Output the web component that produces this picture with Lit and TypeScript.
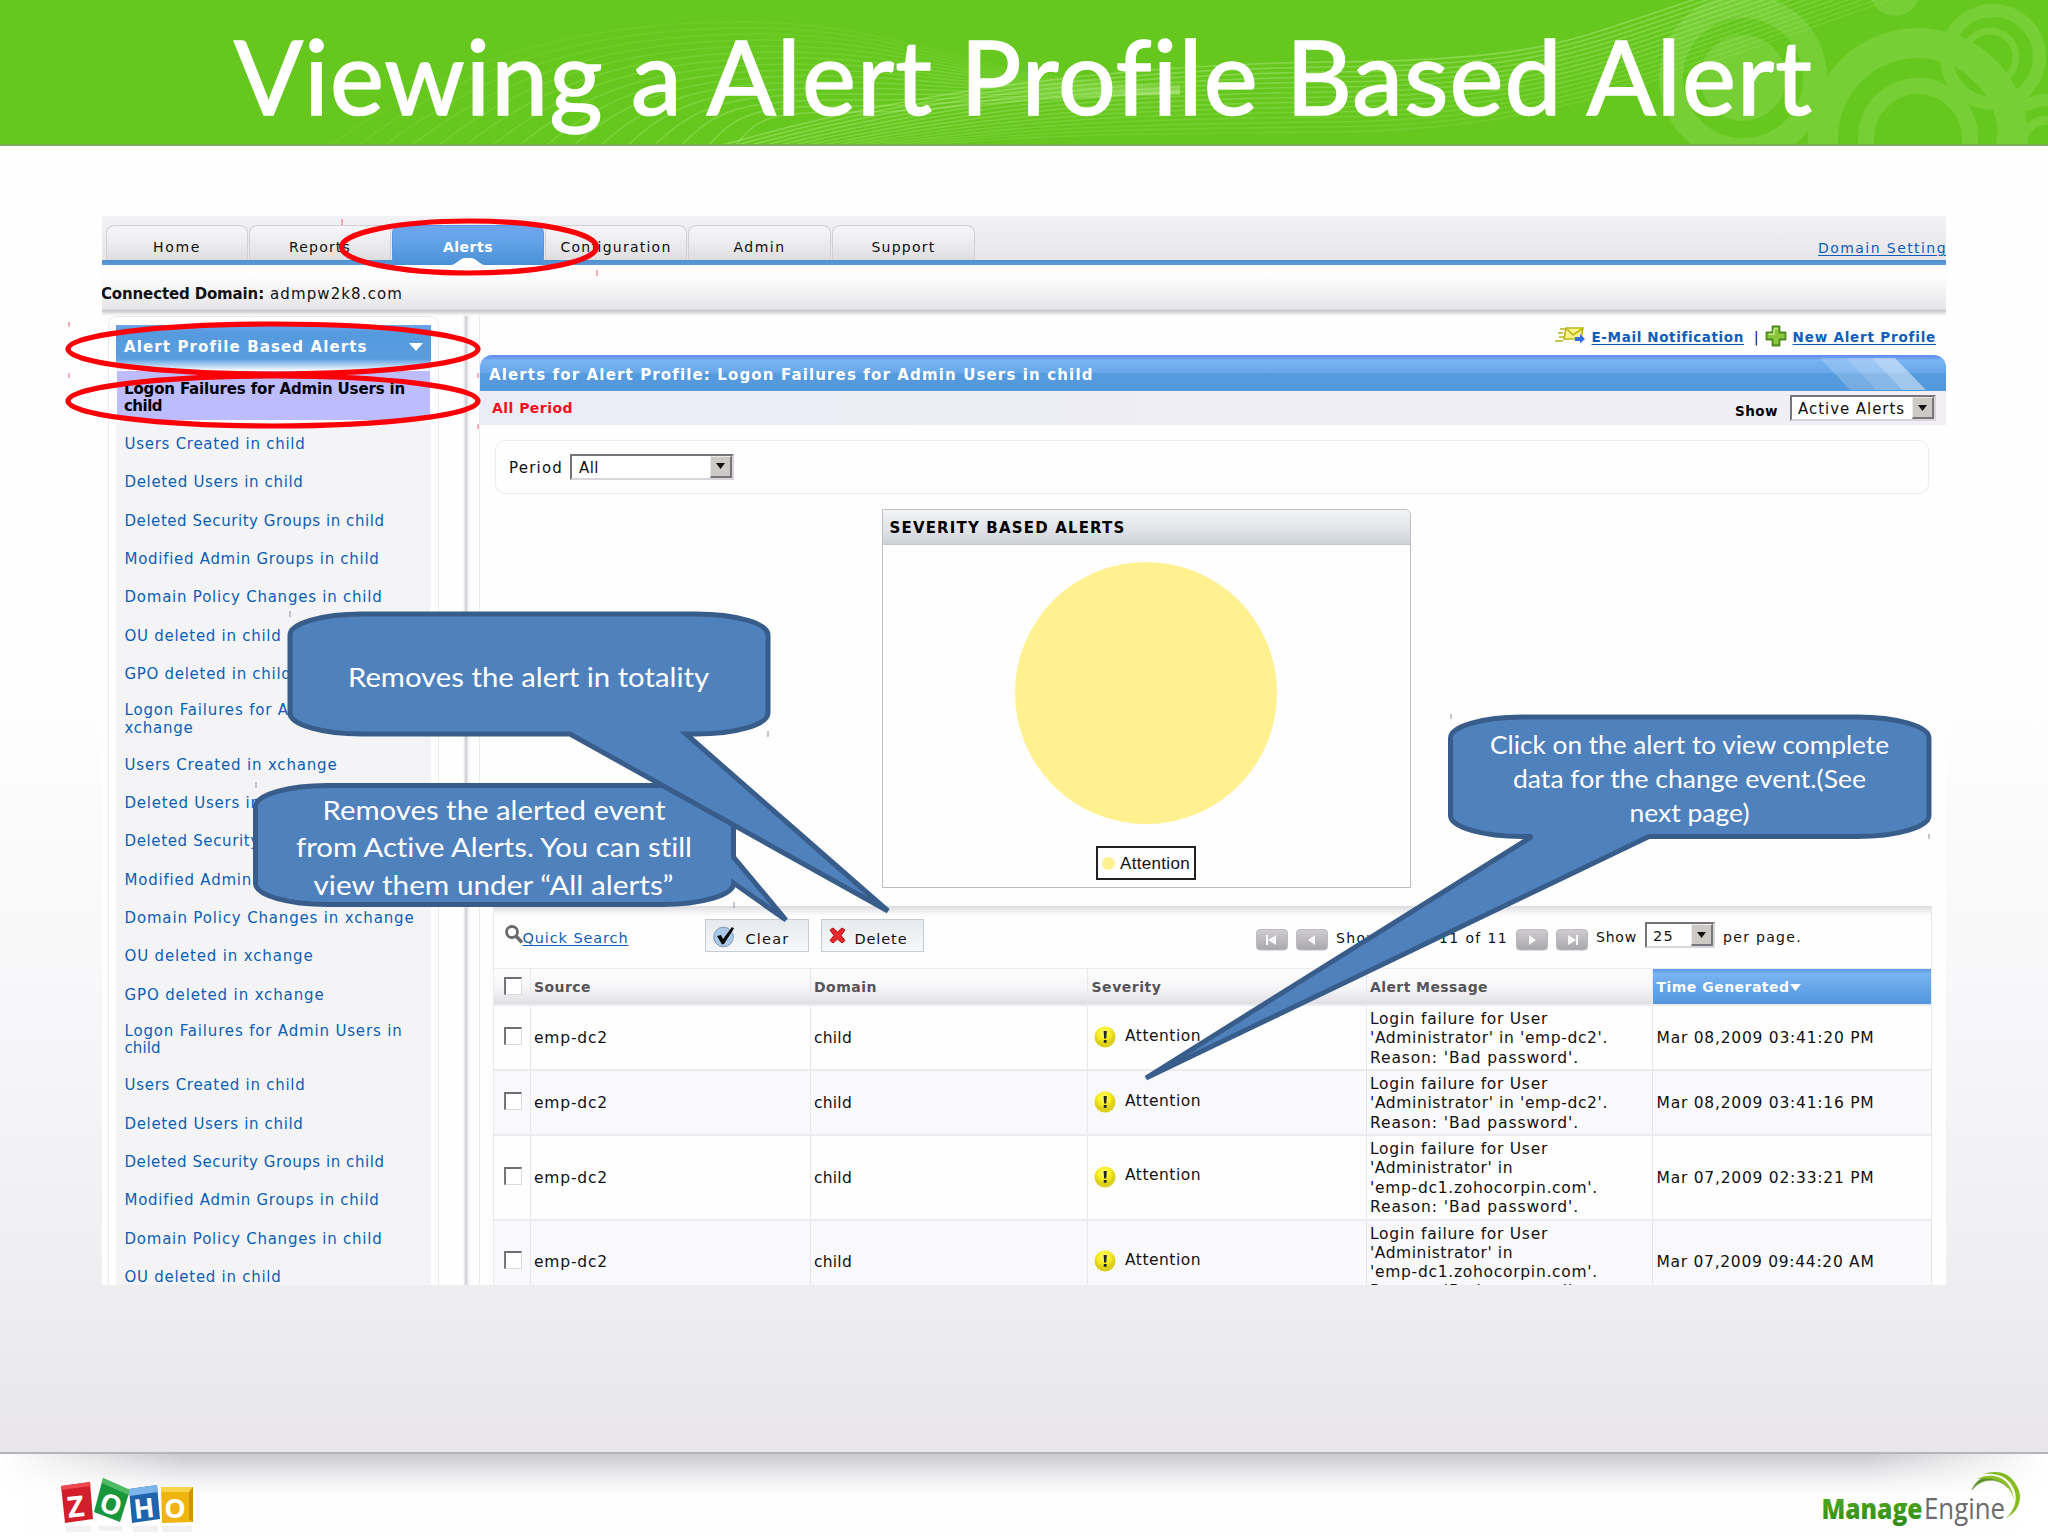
import { LitElement, html, css, svg, nothing } from "lit";
import { customElement } from "lit/decorators.js";

type Item = { lines: [string, number][] };

const NAV: Item[] = [
  { lines: [["Users Created in child", 181]] },
  { lines: [["Deleted Users in child", 179]] },
  { lines: [["Deleted Security Groups in child", 260]] },
  { lines: [["Modified Admin Groups in child", 255]] },
  { lines: [["Domain Policy Changes in child", 258]] },
  { lines: [["OU deleted in child", 157]] },
  { lines: [["GPO deleted in child", 167]] },
  { lines: [["Logon Failures for Admin Users in", 278], ["xchange", 69]] },
  { lines: [["Users Created in xchange", 213]] },
  { lines: [["Deleted Users in xchange", 211]] },
  { lines: [["Deleted Security Groups in xchange", 292]] },
  { lines: [["Modified Admin Groups in xchange", 287]] },
  { lines: [["Domain Policy Changes in xchange", 290]] },
  { lines: [["OU deleted in xchange", 189]] },
  { lines: [["GPO deleted in xchange", 200]] },
  { lines: [["Logon Failures for Admin Users in", 278], ["child", 36]] },
  { lines: [["Users Created in child", 181]] },
  { lines: [["Deleted Users in child", 179]] },
  { lines: [["Deleted Security Groups in child", 260]] },
  { lines: [["Modified Admin Groups in child", 255]] },
  { lines: [["Domain Policy Changes in child", 258]] },
  { lines: [["OU deleted in child", 157]] },
];

const TABS: [string, number][] = [
  ["Home", 48], ["Reports", 62], ["Alerts", 50], ["Configuration", 111], ["Admin", 52], ["Support", 64],
];

const SHORT: [string, number][] = [
  ["Login failure for User", 178], ["'Administrator' in 'emp-dc2'.", 238], ["Reason: 'Bad password'.", 209],
];
const LONG: [string, number][] = [
  ["Login failure for User", 178], ["'Administrator' in", 143], ["'emp-dc1.zohocorpin.com'.", 228], ["Reason: 'Bad password'.", 209],
];
const ROWS = [
  { msg: SHORT, time: "Mar 08,2009 03:41:20 PM" },
  { msg: SHORT, time: "Mar 08,2009 03:41:16 PM" },
  { msg: LONG, time: "Mar 07,2009 02:33:21 PM" },
  { msg: LONG, time: "Mar 07,2009 09:44:20 AM" },
];

const fit = (text: string, w: number, cls = "") => html`<span class="fit ${cls}" data-w=${w}>${text}</span>`;

/* Pager glyphs: first, previous, next, last */
const pager = (d: string) => html`<svg class="pg" width="32" height="22" viewBox="0 0 32 22">
  <defs><linearGradient id="g" x1="0" y1="0" x2="0" y2="1"><stop offset="0" stop-color="#cfcdd0"/><stop offset="1" stop-color="#a9a7ab"/></linearGradient></defs>
  <rect x=".5" y=".5" width="31" height="20.5" rx="3.5" fill="url(#g)" stroke="#bdbbbf"/><path d=${d} fill="#f8f8f8"/></svg>`;

const select = (label: string, w: number, cls: string) => html`<span class="select ${cls}">${fit(label, w)}<span class="drop"><svg width="9" height="6" viewBox="0 0 9 6"><path d="M0 0h9L4.500 6z" fill="#111"/></svg></span></span>`;

const callout = (x: number, y: number, w: number, h: number, tail: string, side: string) => {
  const rx = 72, ry = 21, r = x + w, b = y + h;
  const bottom = side === "bottom" ? tail : "";
  const right = side === "right" ? tail : "";
  return svg`<path class="callout" d="M${x + rx} ${y}H${r - rx}A${rx} ${ry} 0 0 1 ${r} ${y + ry}${right}V${b - ry}A${rx} ${ry} 0 0 1 ${r - rx} ${b}${bottom}H${x + rx}A${rx} ${ry} 0 0 1 ${x} ${b - ry}V${y + ry}A${rx} ${ry} 0 0 1 ${x + rx} ${y}Z"/>`;
};
const ctext = (t: string, x: number, y: number, w: number, size: number) =>
  svg`<text x=${x} y=${y} font-size=${size} textLength=${w} lengthAdjust="spacingAndGlyphs">${t}</text>`;

@customElement("app-root")
export class AppRoot extends LitElement {
  static styles = css`
    :host { display: block; width: 2048px; height: 1536px; overflow: hidden; position: relative;
      font-family: "DejaVu Sans", Verdana, sans-serif; color: #111; font-size: 15px; }
    * { box-sizing: border-box; }
    .fit { display: inline-block; white-space: nowrap; }
    .slide { display: flex; flex-direction: column; width: 2048px; height: 1536px;
      background: linear-gradient(#fff 0, #fefefe 700px, #f7f6f8 1000px, #eeedef 1290px, #e8e6e9 1452px); }
    .banner { height: 146px; background: #66c81e; border-bottom: 2px solid #7fae59; display: grid; flex: none; overflow: hidden; }
    .banner > * { grid-area: 1 / 1; }
    h1 { margin: 0; padding-left: 234px; font: 400 102px/122px Lato, Carlito, sans-serif; color: #fff; padding-top: 15px; height: 144px; z-index: 1;
      -webkit-text-stroke: 1.600px #fff; font-variant-ligatures: none; }
    .shot { margin: 70px 0 0 102px; width: 1844px; height: 1069px; overflow: hidden; background: #fefefe; flex: none; display: flex; flex-direction: column; }
    .tabs { height: 49px; flex: none; padding: 9px 0 0 4px; display: flex; gap: 1px; align-items: flex-start;
      background: linear-gradient(#4d8fd0, #5d9bd8) bottom / 100% 5px no-repeat, linear-gradient(#f2f1f3, #e6e4e7); }
    .tab { width: 142px; height: 35px; border: 1px solid #d2d0d4; border-bottom: 0; border-radius: 8px 8px 0 0; padding-top: 11px;
      background: linear-gradient(#f5f4f6 0, #eeedef 45%, #dddcdf 100%); text-align: center; font-size: 14px; line-height: 20px; }
    .tab.on { width: 152px; height: 40px; color: #fff; font-weight: 700; border-color: #5a93e6; display: flex; flex-direction: column; align-items: center;
      background: linear-gradient(#6ea5ee, #62a3e6 40%, #4a8fd6); }
    .tab.on svg { margin-top: 1px; flex: none; }
    .tab.w { width: 143px; }
    .setting { margin-left: auto; width: 128px; overflow: hidden; white-space: nowrap; font-size: 14px; line-height: 20px; padding-top: 13px; height: 35px; }
    .link { color: #0f5db8; text-decoration: underline; text-underline-offset: 2px; }
    .domain { height: 51px; flex: none; font-size: 15px; line-height: 20px; padding-top: 19px; display: flex; gap: 6px; margin-left: -1px;
      background: linear-gradient(#fff 0, #fdfcfd 14px, #e5e4e7 44px, #cdccd0 45px, #cfced1 47px, #e4e3e6 48px, #fdfdfd 51px); }
    .body { display: flex; flex: none; height: 969px; align-items: stretch; }
    .side { width: 378px; flex: none; display: flex; padding-left: 6px; }
    .sidebox { width: 331px; border: 1.5px solid #ebeaf0; border-bottom: 0; border-radius: 9px 9px 0 0; padding: 8px 7px 0; background: #fefefe; }
    .gutter { margin-left: 24px; width: 8px; background: linear-gradient(90deg, #fff, #d3d2d6 35%, #d0cfd3 48%, #f1f0f3 60%, #fefefe); }
    .sidehead { height: 46px; background: linear-gradient(#6ba5ea 0, #559ade 8px, #5a9ee0 34px, #fefefe 46px); color: #fff; font-weight: 700; font-size: 15px;
      line-height: 20px; padding: 12px 8px 0 8px; display: flex; justify-content: space-between; }
    .sidehead svg { margin-top: 6px; }
    .sel { height: 49px; margin: 0 1px; background: #bcbcfe; font-weight: 700; color: #000; padding: 9.500px 0 0 7px; line-height: 17.600px; display: flex; flex-direction: column; align-items: flex-start; }
    .nav { background: #f4f4f6; padding: 3.500px 0 0 8.500px; border-top: 2px solid #fefefe; height: 880px; margin-top: 0; color: #0b5fb5; }
    .item { height: 38.400px; display: flex; flex-direction: column; justify-content: center; align-items: flex-start; line-height: 17.600px; }
    .item.two { height: 51.900px; padding-bottom: 1px; }
    .main { flex: 1; display: flex; flex-direction: column; border-left: 1.500px solid #eceaf0; margin-left: -1px; }
    .actions { height: 39px; flex: none; display: flex; font-weight: 700; font-size: 13.500px; line-height: 20px; padding: 11px 10px 0 1074.500px; white-space: nowrap; align-items: flex-start; }
    .actions .bar { margin: 0 6px 0 10px; font-weight: 400; }
    .actions .mail { margin: -1px 7px 0 0; }
    .actions .plus { margin: -2px 6px 0 0; }
    .title { height: 36px; flex: none; border-radius: 12px 12px 0 0; background: linear-gradient(#5f8fee 0, #6a9cf0 3px, #78b3f2 5px, #69a9ea 17px, #569bde 19px, #5298dc 100%);
      color: #fff; font-weight: 700; line-height: 20px; padding: 10px 60px 0 9px; display: flex; justify-content: space-between; }
    .title svg { margin-top: -7px; margin-right: -42px; }
    .period { height: 34px; flex: none; background: linear-gradient(90deg, #ebecf6, #f1eff4); display: flex; line-height: 20px; font-weight: 700; }
    .period .red { color: #f0101c; margin: 7px 0 0 12px; font-size: 14px; }
    .period .show { margin: 10px 12px 0 auto; font-size: 13.500px; color: #000; }
    .select { display: inline-flex; border: 2px solid #d8d6da; border-top: 2.500px solid #76747a; border-left: 2.500px solid #76747a; background: #fff; height: 26px;
      font-weight: 400; color: #111; line-height: 24px; justify-content: space-between; flex: none; }
    .drop { background: #cdcac6; border: 1.500px solid #eceae8; border-right: 2px solid #77757a; border-bottom: 2px solid #77757a; width: 22px; display: flex; align-items: center; justify-content: center; }
    .active { width: 146px; margin: 4px 10px 0 0; padding-left: 6px; }
    .filter { margin: 15px 17px 0 15px; height: 54px; flex: none; border: 1.500px solid #ecebf1; border-radius: 10px; padding: 12.500px 0 0 13px; display: flex; gap: 7px; line-height: 28px; }
    .all { width: 164px; padding-left: 7px; }
    .chart { margin: 15px 0 0 401.500px; width: 529px; height: 379px; flex: none; border: 1.500px solid #bdbdc2; border-radius: 0 6px 0 0; display: flex; flex-direction: column; align-items: center; }
    .charthead { align-self: stretch; height: 35px; background: linear-gradient(#f2f3f5, #dfe2e6 60%, #ccd1d7); border-bottom: 1.500px solid #c4c8cd; border-radius: 0 5px 0 0; font-weight: 700; line-height: 20px; padding: 7.500px 0 0 7px; color: #000; }
    .pie { width: 262px; height: 262px; border-radius: 50%; background: #fff18f; margin-top: 17px; flex: none; }
    .legend { margin-top: 22px; width: 100px; height: 34px; border: 2px solid #222; display: flex; align-items: center; gap: 5px; padding: 1px 0 0 4px; font: 17px "Liberation Sans", Arial, sans-serif; flex: none; }
    .legend i { width: 13px; height: 13px; border-radius: 50%; background: #fff18f; }
    .grid { margin: 18px 14px 0 12.500px; flex: none; border: 1.500px solid #e9e8ec; border-top: 0; }
    .tools { height: 62px; display: flex; align-items: flex-start; line-height: 20px; font-size: 14.500px; background: linear-gradient(#dbdadd 0, #ebeaec 4px, #fefefe 10px); padding-left: 10px; }
    .tools > .mag { margin: 19px -1px 0 0; }
    .tools .qs { margin-top: 22px; }
    .btn { height: 33.500px; margin-top: 12.500px; border: 1.500px solid #c6ccd3; background: linear-gradient(#e6eaee, #eff1f3 50%, #f6f7f8); display: flex; padding: 9px 0 0 7px; }
    .btn svg { margin: -4px 10px 0 0; flex: none; }
    .del svg { margin: -2px 9px 0 0; }
    .clear { width: 104px; margin-left: 76px; }
    .del { width: 103px; margin-left: 12px; }
    .pg { margin: 22.500px 8px 0 0; flex: none; }
    .pages { margin: 22px 8px 0 0; font-size: 14px; }
    .per { margin: 21px 8px 0 0; font-size: 14px; }
    .n25 { width: 70px; margin: 16px 8px 0 0; padding-left: 6px; }
    .row { display: grid; grid-template-columns: 36px 280px 277.500px 278.500px 286.500px 1fr; min-height: 65px; border-top: 2px solid #ebeaee; }
    .row > div { border-left: 1.500px solid #e9e7ec; display: flex; align-items: center; padding-left: 3.500px; }
    .row > div:first-child { border-left: 0; padding-left: 10px; }
    .row.even { background: #f9f8fb; }
    .row.tall { height: 84.500px; }
    .row.head { min-height: 36px; height: 36px; font-weight: 700; font-size: 14px; color: #555459; background: linear-gradient(#fefefe 0, #f7f6f8 50%, #e0dfe2 100%); border-top: 1.500px solid #ebeaee; }
    .row.head > div { padding-top: 1px; }
    .head .time { color: #fff; background: linear-gradient(#5f97ea 0, #78b3f2 5px, #64a5e8 19px, #5197db 100%); }
    .row .msg { flex-direction: column; align-items: flex-start; justify-content: flex-start; line-height: 19.300px; padding-top: 4px; font-size: 15.500px; }
    .row .sev { align-items: center; gap: 9px; padding: 0 0 4px 6px; }
    .sev svg { margin-top: 3px; flex: none; }
    .cell { font-size: 15.500px; padding-top: 1px; }
    .cb { width: 18px; height: 18px; border: 1.500px solid #dcdadd; border-top: 2.500px solid #6f6d72; border-left: 2.500px solid #77757a; background: #fff; margin-bottom: 3px; }
    .footer { flex: 1; display: flex; justify-content: space-between; align-items: flex-start; border-top: 2px solid #b6b4b8;
      background: linear-gradient(90deg, #fff 0, transparent 9%, transparent 91%, #fff 100%), linear-gradient(#c9c8cb 0, #dddcdf 12px, #f3f2f4 28px, #fefefe 42px); }
    .rest { height: 167px; flex: none; }
    .notes { position: absolute; left: 0; top: 0; pointer-events: none; }
    .callout { fill: #4f81bd; stroke: #385d8a; stroke-width: 5; stroke-linejoin: miter; stroke-miterlimit: 3; }
    .notes text { font-family: Lato, Carlito, sans-serif; fill: #fff; text-anchor: middle; font-variant-ligatures: none; }
    .ring { fill: none; stroke: #fb0007; stroke-width: 5.200; }
  `;

  async firstUpdated() {
    await document.fonts.ready;
    for (const el of this.renderRoot.querySelectorAll<HTMLElement>(".fit")) {
      const goal = Number(el.dataset.w);
      const len = (el.textContent ?? "").length;
      const gap = (goal - el.getBoundingClientRect().width) / len;
      el.style.letterSpacing = `${gap}px`;
    }
  }

  private waves() {
    const out = [];
    for (let i = 0; i < 16; i++) {
      out.push(svg`<path d="M${330 + i * 27} 146C${430 + i * 22} ${70 + i * 3} ${560 + i * 14} ${22 + i * 6} ${740 + i * 8} ${22 + i * 6}S${960} ${84 + i} 1180 ${85 + i * 0.6}" opacity=${0.06 + i * 0.011}/>`);
    }
    for (let i = 0; i < 15; i++) {
      out.push(svg`<path d="M${720 + i * 14} 146C${900 + i * 10} ${92 + i * 3} 1120 ${64 + i * 5} 1330 ${62 + i * 5}S${1560 + i * 6} ${44 + i * 3} ${1705 + i * 14} -4" opacity=${0.28 - i * 0.013}/>`);
    }
    return out;
  }

  render() {
    return html`
      <div class="slide">
        <div class="banner">
          <svg width="2048" height="146" viewBox="0 0 2048 146">
            <g fill="none" stroke="#76cf34">
              <circle cx="1743" cy="78" r="72" stroke-width="24"/>
              <circle cx="1743" cy="78" r="43" fill="#76cf34" stroke="none"/>
              <circle cx="1918" cy="138" r="95" stroke-width="30"/>
              <circle cx="1918" cy="138" r="52" stroke-width="16"/>
              <circle cx="1895" cy="-9" r="25" fill="#76cf34" stroke="none"/>
              <circle cx="1993" cy="57" r="46.500" stroke-width="13"/>
              <circle cx="1990" cy="57" r="26" stroke-width="7"/>
              <circle cx="2048" cy="146" r="46" stroke-width="12"/>
              <circle cx="2048" cy="146" r="26" stroke-width="9"/>
            </g>
            <g fill="none" stroke="#e4ffc4" stroke-width="1.600">${this.waves()}</g>
          </svg>
          <h1>${fit("Viewing a Alert Profile Based Alert", 1579)}</h1>
        </div>

        <div class="shot">
          <div class="tabs">
            ${TABS.map(([t, w], i) => html`<div class="tab ${t === "Alerts" ? "on" : ""} ${i > 3 ? "w" : ""}">${fit(t, w)}${t === "Alerts" ? html`<svg width="38" height="8" viewBox="0 0 38 8"><path d="M0 8C7 7 11 0 16 0h6c5 0 9 7 16 8z" fill="#fff"/></svg>` : nothing}</div>`)}
            <div class="setting">${fit("Domain Setting", 129, "link")}</div>
          </div>
          <div class="domain"><b>${fit("Connected Domain:", 163)}</b>${fit("admpw2k8.com", 133)}</div>

          <div class="body">
            <div class="side">
              <div class="sidebox">
                <div class="sidehead">${fit("Alert Profile Based Alerts", 243)}<svg width="14" height="8" viewBox="0 0 14 8"><path d="M0 0h14L7 8z" fill="#fff"/></svg></div>
                <div class="sel">${fit("Logon Failures for Admin Users in", 281)}${fit("child", 38)}</div>
                <div class="nav">
                  ${NAV.map((n) => html`<div class="item ${n.lines.length > 1 ? "two" : ""}">${n.lines.map(([t, w]) => fit(t, w))}</div>`)}
                </div>
              </div>
              <div class="gutter"></div>
            </div>

            <div class="main">
              <div class="actions">
                <svg class="mail" width="30" height="18" viewBox="0 0 30 18"><path d="M5 3h5M3 7h5M4 11h5M0 15h8" stroke="#b9b21a" stroke-width="1.600"/><path d="M11 2h17l-2 11H9z" fill="#f8f48e" stroke="#bcb416" stroke-width="1.600"/><path d="M12 3l6 6 9-6" fill="none" stroke="#bcb416" stroke-width="1.600"/><path d="M20 11h5V8l5 5-5 4.500V15h-5z" fill="#2f6fe0"/></svg>
                ${fit("E-Mail Notification", 152, "link")}<span class="bar">|</span>
                <svg class="plus" width="22" height="22" viewBox="0 0 22 22"><path d="M7.500 1.500h7v6h6v7h-6v6h-7v-6h-6v-7h6z" fill="#8cc63a" stroke="#4c8a1c" stroke-width="1.800" stroke-linejoin="round"/><path d="M9 3.500h4M3.500 9.200H9V4" stroke="#c5e88a" stroke-width="1.500" fill="none"/></svg>
                ${fit("New Alert Profile", 143, "link")}
              </div>
              <div class="title">${fit("Alerts for Alert Profile: Logon Failures for Admin Users in child", 604)}
                <svg width="108" height="32" viewBox="0 0 108 32"><path d="M0 0h26l30 32H30z" fill="#fff" opacity=".2"/><path d="M26 0h26l30 32H56z" fill="#fff" opacity=".3"/><path d="M52 0h23l31 32H82z" fill="#fff" opacity=".45"/></svg>
              </div>
              <div class="period"><span class="red">${fit("All Period", 81)}</span><span class="show">${fit("Show", 43)}</span>${select("Active Alerts", 107, "active")}</div>
              <div class="filter">${fit("Period", 54)}${select("All", 20, "all")}</div>
              <div class="chart">
                <div class="charthead">${fit("SEVERITY BASED ALERTS", 236)}</div>
                <div class="pie"></div>
                <div class="legend"><i></i>${fit("Attention", 70)}</div>
              </div>

              <div class="grid">
                <div class="tools">
                  <svg class="mag" width="20" height="20" viewBox="0 0 20 20"><circle cx="8" cy="7" r="5.500" fill="none" stroke="#6c6a6e" stroke-width="2.800"/><path d="M12 11l6 6.500" stroke="#6c6a6e" stroke-width="3.400"/></svg>
                  ${fit("Quick Search", 106, "link qs")}
                  <div class="btn clear"><svg width="23" height="23" viewBox="0 0 23 23"><circle cx="10.500" cy="12" r="9.800" fill="#a9c8ea" stroke="#8098b5"/><path d="M4 11l4-1 2 4 9-12 2 1.500-10 15.500-2 .5z" fill="#0b0b0b"/></svg>${fit("Clear", 44)}</div>
                  <div class="btn del"><svg width="17" height="17" viewBox="0 0 17 17"><path d="M1 3l3-2 4.500 4L13 1l3 2-4 5.500 4 5-3 2.500-4.500-4-4.500 4-3-2.500 4-5z" fill="#e8262c" stroke="#a90f14" stroke-linejoin="round"/></svg>${fit("Delete", 53)}</div>
                  <span style="width:332.500px;flex:none"></span>
                  ${pager("M10 6h2v10h-2zM20 6v10l-8-5z")}${pager("M19 6v10l-7-5z")}
                  <span class="pages">${fit("Showing 1 - 11 of 11", 172)}</span>
                  ${pager("M13 6v10l7-5z")}${pager("M12 6v10l8-5zM20 6h2v10h-2z")}
                  <span class="per">${fit("Show", 41)}</span>${select("25", 21, "n25")}<span class="per">${fit("per page.", 79)}</span>
                </div>
                <div class="row head">
                  <div><span class="cb"></span></div><div>${fit("Source", 57)}</div><div>${fit("Domain", 63)}</div><div>${fit("Severity", 70)}</div><div>${fit("Alert Message", 118)}</div>
                  <div class="time">${fit("Time Generated", 133)}<svg width="11" height="7" viewBox="0 0 11 7"><path d="M0 0h11L5.500 7z" fill="#fff"/></svg></div>
                </div>
                ${ROWS.map((r, i) => html`<div class="row ${i % 2 ? "even" : ""} ${r.msg.length > 3 ? "tall" : ""}">
                  <div><span class="cb"></span></div>
                  <div class="cell">${fit("emp-dc2", 74)}</div>
                  <div class="cell">${fit("child", 38)}</div>
                  <div class="cell sev"><svg width="22" height="24" viewBox="0 0 22 24"><defs><radialGradient id="y" cx=".45" cy=".3"><stop offset="0" stop-color="#fdf97a"/><stop offset=".6" stop-color="#f8ef20"/><stop offset="1" stop-color="#ddd01c"/></radialGradient></defs><circle cx="11" cy="12" r="10.500" fill="url(#y)"/><path d="M9.600 6h3.200l-.5 7.500h-2.200zM9.800 15h2.800v2.800H9.800z" fill="#222"/></svg>${fit("Attention", 76)}</div>
                  <div class="msg">${r.msg.map(([t, w]) => fit(t, w))}</div>
                  <div class="cell">${fit(r.time, 218)}</div>
                </div>`)}
              </div>
            </div>
          </div>
        </div>
        <div class="rest"></div>

        <div class="footer">
          <svg width="300" height="83" viewBox="0 22 300 83">
            <g stroke-linejoin="round" font-family="Open Sans, sans-serif" font-weight="700" fill="#fff" text-anchor="middle">
              <path d="M61 54l29-4 3 37-28 4z" fill="#d21f2b"/><path d="M61 54l29-4 .5 4-29 4z" fill="#ee4a50"/><text x="76" y="85" font-size="29" transform="rotate(-6 76 76)">Z</text>
              <path d="M103 46l27 12-10 32-26-10z" fill="#17963c"/><path d="M103 46l27 12-1.500 5-27-12z" fill="#4dbb63"/><text x="111" y="82" font-size="27" transform="rotate(18 111 72)">O</text>
              <path d="M129 57l28-4 3 34-28 4z" fill="#1f63ad"/><path d="M129 57l28-4 .5 7-28 4z" fill="#7db4ea"/><text x="144" y="86" font-size="27" transform="rotate(-6 144 76)">H</text>
              <path d="M161 55h32v35l-31 1z" fill="#f0b40f"/><path d="M161 55h32l-4 5h-28z" fill="#f8d34a"/><path d="M193 55v35l-4-3V60z" fill="#cf930a"/><text x="175" y="86" font-size="27">O</text>
            </g>
            <path d="M65 94h26v6H66zM98 94h24v5H99zM132 94h26v6h-25zM162 94h30v6h-29z" fill="#000" opacity=".05"/>
          </svg>
          <svg width="288" height="83" viewBox="0 22 288 83">
            <defs><linearGradient id="me" x1="0" y1="0" x2="0" y2="1"><stop offset="0" stop-color="#5ab01f"/><stop offset="1" stop-color="#2d8a17"/></linearGradient></defs>
            <g font-family="Open Sans, sans-serif" font-size="29">
              <text x="61.500" y="86.500" font-weight="800" fill="url(#me)" textLength="101" lengthAdjust="spacingAndGlyphs">Manage</text>
              <text x="164" y="86.500" font-weight="400" fill="#6b6a6d" textLength="81" lengthAdjust="spacingAndGlyphs">Engine</text>
            </g>
            <path d="M212 58C218 42 236 40 248 56C238 45 221 46 212 58z" fill="#5a8f2a" stroke="#6f9d3c" stroke-width=".6"/>
            <path d="M217 47C236 38 252 48 254 68C250 52 238 44 217 47z" fill="#8cbf26"/>
            <path d="M223 42C246 34 261 50 258 68C256 50 243 40 223 42z" fill="#7db61d"/>
            <path d="M232 40C262 42 270 74 246 86C264 70 256 46 232 40z" fill="#86bc1e"/>
          </svg>
        </div>
      </div>

      <svg class="notes" width="2048" height="1536" viewBox="0 0 2048 1536">
        <path d="M342 219v6M597 270v6M69 322v5M69 373v5M478 373v5M478 424v5" stroke="#f06070" stroke-width="1"/>
        <ellipse class="ring" cx="469" cy="247" rx="127.500" ry="26"/>
        <ellipse class="ring" cx="273" cy="349" rx="205" ry="25"/>
        <ellipse class="ring" cx="273" cy="401" rx="205" ry="25"/>
        ${callout(255.5, 785.5, 478, 119, "V857L786 920L733.5 883", "right")}
        ${callout(290, 614, 478, 120, "H686L888 911L570 734", "bottom")}
        ${callout(1450.5, 717, 478.5, 119.5, "H1649L1146 1078L1532 836.5", "bottom")}
        <path d="M290 611v6M256 782v6M768 731v6M734 902v6M1451 714v5M1929 834v5" stroke="#8a8fa0" stroke-width="1"/>
        ${ctext("Removes the alert in totality", 528.5, 686.5, 361, 27.5)}
        ${ctext("Removes the alerted event", 494, 820, 343, 27.5)}
        ${ctext("from Active Alerts. You can still", 494, 857, 396, 27.5)}
        ${ctext("view them under “All alerts”", 493.5, 895, 360, 27.5)}
        ${ctext("Click on the alert to view complete", 1689.5, 754, 399, 25.5)}
        ${ctext("data for the change event.(See", 1689.5, 787.5, 353, 25.5)}
        ${ctext("next page)", 1689.5, 822, 120, 25.5)}
      </svg>
    `;
  }
}
